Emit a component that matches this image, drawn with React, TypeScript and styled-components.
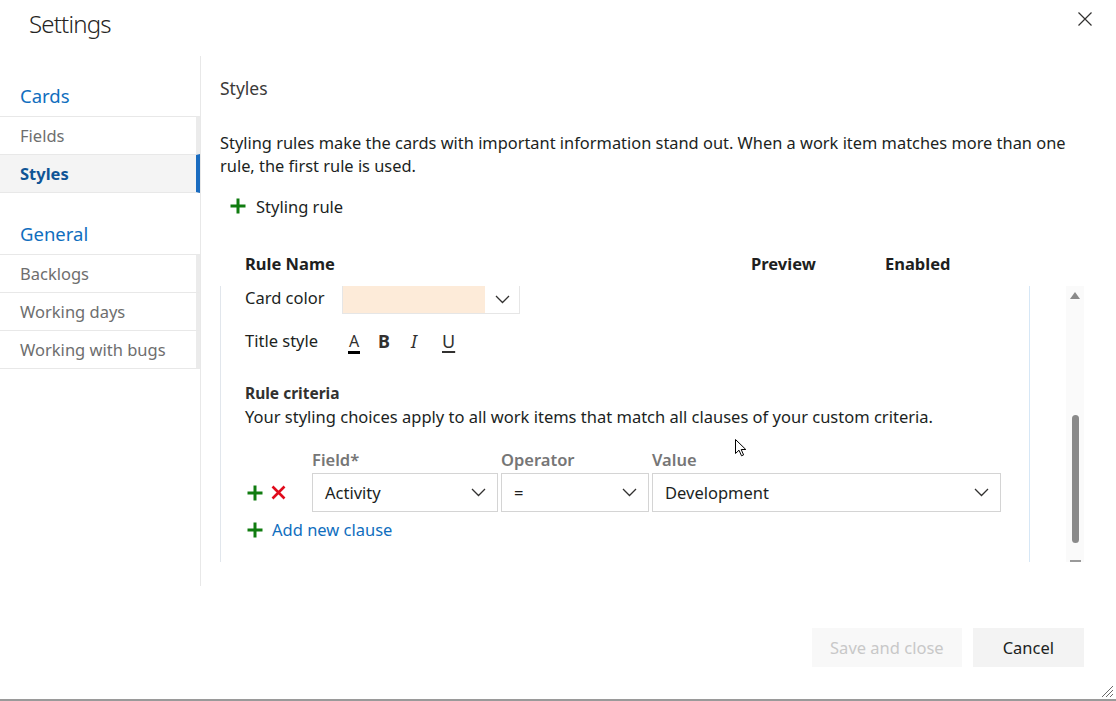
import React from 'react'
import styled, { createGlobalStyle } from 'styled-components'

const GlobalStyle = createGlobalStyle`
  html, body {
    margin: 0;
    padding: 0;
    background: #fff;
  }
  body {
    font-family: "Segoe UI", "Noto Sans", "Open Sans", sans-serif;
    font-size: 16.5px;
    color: #201f1e;
  }
`

const Dialog = styled.div`
  position: relative;
  width: 1116px;
  height: 701px;
  box-sizing: border-box;
  border-bottom: 2px solid #9a9a9a;
  display: flex;
  flex-direction: column;
  background: #fff;
  overflow: hidden;
`

const Header = styled.div`
  height: 56px;
  display: flex;
  justify-content: space-between;
  align-items: flex-start;
  padding: 7px 24px 0 29px;
  box-sizing: border-box;
`

const Title = styled.div`
  font-size: 24px;
  font-weight: 300;
  letter-spacing: -0.8px;
  line-height: 34px;
  color: #252423;
`

const CloseButton = styled.button`
  border: none;
  background: none;
  padding: 0;
  margin-top: 5px;
  width: 14px;
  height: 14px;
  display: flex;
`

const Body = styled.div`
  display: flex;
  height: 530px;
`

const Nav = styled.nav`
  width: 200px;
  border-right: 1px solid #e8e8e8;
  padding-top: 20px;
  box-sizing: content-box;
`

const NavGroup = styled.div`
  & + & {
    margin-top: 21px;
  }
`

const NavHeader = styled.div`
  height: 40px;
  line-height: 40px;
  padding-left: 20px;
  font-size: 18.5px;
  color: #106ebe;
`

const NavItem = styled.div<{ $selected?: boolean }>`
  height: 37px;
  line-height: 37px;
  padding-left: 20px;
  border-top: 1px solid #e8e8e8;
  border-right: 4px solid ${(p) => (p.$selected ? '#1a6cc0' : '#ebebeb')};
  background: ${(p) => (p.$selected ? '#f4f4f4' : '#fff')};
  color: ${(p) => (p.$selected ? '#0f5596' : '#6e6e6e')};
  font-weight: ${(p) => (p.$selected ? 700 : 400)};
  &:last-child {
    border-bottom: 1px solid #e8e8e8;
  }
`

const Main = styled.main`
  flex: 1;
  padding: 20px 32px 0 19px;
  display: flex;
  flex-direction: column;
`

const SectionTitle = styled.div`
  font-size: 17.5px;
  line-height: 24px;
  color: #3b3a39;
`

const Description = styled.p`
  margin: 31px 0 0;
  font-size: 16.4px;
  line-height: 23px;
  color: #201f1e;
`

const AddRuleButton = styled.button`
  margin-top: 13px;
  height: 32px;
  align-self: flex-start;
  display: flex;
  align-items: center;
  gap: 10px;
  padding: 0 0 0 10px;
  border: none;
  background: none;
  font: inherit;
  color: #201f1e;
`

const TableHeader = styled.div`
  margin-top: 30px;
  height: 24px;
  line-height: 24px;
  padding-left: 25px;
  display: grid;
  grid-template-columns: 506px 134px auto;
  font-weight: 700;
  color: #201f1e;
`

const ScrollArea = styled.div`
  margin-top: 10px;
  height: 276px;
  display: flex;
  justify-content: space-between;
`

const ScrollContent = styled.div`
  width: 784px;
  border-left: 1px solid #e1e6ec;
  border-right: 1px solid #d6e7f6;
  padding-left: 24px;
  overflow: hidden;
`

const Scrollbar = styled.div`
  width: 18px;
  background: #fafafa;
  display: flex;
  flex-direction: column;
  align-items: center;
`

const ScrollArrow = styled.div`
  margin-top: 6px;
  width: 0;
  height: 0;
  border-left: 5.5px solid transparent;
  border-right: 5.5px solid transparent;
  border-bottom: 7px solid #8a8a8a;
`

const ScrollThumb = styled.div`
  margin-top: 116px;
  width: 7px;
  height: 128px;
  border-radius: 4px;
  background: #8a8a8a;
`

const ScrollBottom = styled.div`
  margin-top: auto;
  width: 11px;
  height: 2px;
  background: #9a9a9a;
`

const FieldRow = styled.div<{ $height: number; $gap?: number }>`
  height: ${(p) => p.$height}px;
  margin-top: ${(p) => p.$gap ?? 0}px;
  display: flex;
  align-items: center;
`

const RowLabel = styled.div<{ $lift?: number }>`
  width: 97px;
  flex: none;
  padding-bottom: ${(p) => p.$lift ?? 0}px;
`

const ColorPicker = styled.div`
  width: 178px;
  height: 28px;
  box-sizing: border-box;
  border: 1px solid #e6e6e6;
  border-top: none;
  display: flex;
  align-self: flex-start;
`

const ColorSwatch = styled.div`
  width: 142px;
  background: #fdebd9;
`

const ChevronCell = styled.div`
  flex: 1;
  display: flex;
  align-items: center;
  justify-content: center;
`

const StyleButtons = styled.div`
  display: flex;
  align-items: center;
  margin-left: 6px;
`

const StyleButton = styled.span<{ $width: number; $bold?: boolean; $italic?: boolean; $underline?: boolean }>`
  width: ${(p) => p.$width}px;
  font-size: 18px;
  font-weight: ${(p) => (p.$bold ? 700 : 400)};
  font-style: ${(p) => (p.$italic ? 'italic' : 'normal')};
  text-decoration: ${(p) => (p.$underline ? 'underline' : 'none')};
  text-decoration-thickness: 2px;
  text-underline-offset: 3px;
  color: #323130;
`

const FontColorGlyph = styled.span`
  display: inline-block;
  line-height: 18px;
  border-bottom: 3px solid #000;
  padding: 0 1px 1px;
  font-size: 16px;
  color: #323130;
`

const CriteriaTitle = styled.div`
  margin-top: 26px;
  font-size: 15.5px;
  font-weight: 700;
  line-height: 23px;
  color: #323130;
`

const CriteriaText = styled.div`
  line-height: 23px;
`

const ClauseGrid = styled.div<{ $gap?: number }>`
  display: grid;
  grid-template-columns: 62px 186px 148px 349px;
  column-gap: 3px;
  margin-left: 2px;
  margin-top: ${(p) => p.$gap ?? 0}px;
`

const ClauseLabel = styled.div`
  line-height: 23px;
  font-weight: 600;
  color: #767676;
`

const ClauseActions = styled.div`
  display: flex;
  align-items: center;
  gap: 8px;
`

const Dropdown = styled.div`
  height: 39px;
  box-sizing: border-box;
  border: 1px solid #d4d4d4;
  display: flex;
  align-items: center;
  justify-content: space-between;
  padding: 0 11px 0 12px;
  color: #201f1e;
`

const AddClause = styled.div`
  margin: 6px 0 0 2px;
  display: flex;
  align-items: center;
  gap: 9px;
  line-height: 23px;
  color: #106ebe;
`

const Footer = styled.div`
  flex: 1;
  display: flex;
  justify-content: flex-end;
  align-items: flex-start;
  gap: 11px;
  padding: 42px 32px 0 0;
`

const FooterButton = styled.button<{ $disabled?: boolean }>`
  height: 39px;
  padding: 0 ${(p) => (p.$disabled ? 18 : 30)}px;
  border: none;
  font: inherit;
  background: ${(p) => (p.$disabled ? '#f8f8f8' : '#f3f3f3')};
  color: ${(p) => (p.$disabled ? '#c8c8c8' : '#201f1e')};
`

const Cursor = styled.svg`
  position: absolute;
  left: 735px;
  top: 439px;
`

const ResizeGrip = styled.svg`
  position: absolute;
  right: 2px;
  bottom: 1px;
`

const Chevron = () => (
  <svg width="15" height="9" viewBox="0 0 15 9">
    <polyline points="1,1 7.5,7.5 14,1" fill="none" stroke="#323130" strokeWidth="1.3" />
  </svg>
)

const PlusIcon = () => (
  <svg width="16" height="16" viewBox="0 0 16 16">
    <path d="M8 0.5V15.5M0.5 8H15.5" stroke="#107c10" strokeWidth="3" />
  </svg>
)

const RemoveIcon = () => (
  <svg width="15" height="15" viewBox="0 0 15 15">
    <path d="M1.5 1.5L13.5 13.5M13.5 1.5L1.5 13.5" stroke="#e00b1c" strokeWidth="2.6" />
  </svg>
)

const CloseIcon = () => (
  <svg width="14" height="14" viewBox="0 0 14 14">
    <path d="M0.5 0.5L13.5 13.5M13.5 0.5L0.5 13.5" stroke="#323130" strokeWidth="1.2" />
  </svg>
)

const navGroups = [
  { title: 'Cards', items: ['Fields', 'Styles'], selected: 'Styles' },
  { title: 'General', items: ['Backlogs', 'Working days', 'Working with bugs'], selected: '' },
]

const App: React.FC = () => {
  return (
    <Dialog>
      <GlobalStyle />
      <Header>
        <Title>Settings</Title>
        <CloseButton aria-label="Close">
          <CloseIcon />
        </CloseButton>
      </Header>
      <Body>
        <Nav>
          {navGroups.map((group) => (
            <NavGroup key={group.title}>
              <NavHeader>{group.title}</NavHeader>
              <div>
                {group.items.map((item) => (
                  <NavItem key={item} $selected={item === group.selected}>
                    {item}
                  </NavItem>
                ))}
              </div>
            </NavGroup>
          ))}
        </Nav>
        <Main>
          <SectionTitle>Styles</SectionTitle>
          <Description>
            Styling rules make the cards with important information stand out. When a work item matches more than one
            rule, the first rule is used.
          </Description>
          <AddRuleButton>
            <PlusIcon />
            Styling rule
          </AddRuleButton>
          <TableHeader>
            <span>Rule Name</span>
            <span>Preview</span>
            <span>Enabled</span>
          </TableHeader>
          <ScrollArea>
            <ScrollContent>
              <FieldRow $height={28}>
                <RowLabel $lift={5}>Card color</RowLabel>
                <ColorPicker>
                  <ColorSwatch />
                  <ChevronCell>
                    <Chevron />
                  </ChevronCell>
                </ColorPicker>
              </FieldRow>
              <FieldRow $height={30} $gap={12}>
                <RowLabel $lift={1}>Title style</RowLabel>
                <StyleButtons>
                  <StyleButton $width={30}>
                    <FontColorGlyph>A</FontColorGlyph>
                  </StyleButton>
                  <StyleButton $width={33} $bold>B</StyleButton>
                  <StyleButton $width={31} $italic>I</StyleButton>
                  <StyleButton $width={20} $underline>U</StyleButton>
                </StyleButtons>
              </FieldRow>
              <CriteriaTitle>Rule criteria</CriteriaTitle>
              <CriteriaText>Your styling choices apply to all work items that match all clauses of your custom criteria.</CriteriaText>
              <ClauseGrid $gap={20}>
                <span />
                <ClauseLabel>Field*</ClauseLabel>
                <ClauseLabel>Operator</ClauseLabel>
                <ClauseLabel>Value</ClauseLabel>
              </ClauseGrid>
              <ClauseGrid $gap={2}>
                <ClauseActions>
                  <PlusIcon />
                  <RemoveIcon />
                </ClauseActions>
                <Dropdown>
                  Activity
                  <Chevron />
                </Dropdown>
                <Dropdown>
                  =
                  <Chevron />
                </Dropdown>
                <Dropdown>
                  Development
                  <Chevron />
                </Dropdown>
              </ClauseGrid>
              <AddClause>
                <PlusIcon />
                Add new clause
              </AddClause>
            </ScrollContent>
            <Scrollbar>
              <ScrollArrow />
              <ScrollThumb />
              <ScrollBottom />
            </Scrollbar>
          </ScrollArea>
        </Main>
      </Body>
      <Footer>
        <FooterButton $disabled>Save and close</FooterButton>
        <FooterButton>Cancel</FooterButton>
      </Footer>
      <Cursor width="12" height="18" viewBox="0 0 12 18">
        <path d="M0.5 0.5V14.5L4 11.2L6.5 16.8L8.6 15.9L6.2 10.5H10.8Z" fill="#fff" stroke="#000" strokeWidth="1" />
      </Cursor>
      <ResizeGrip width="13" height="13" viewBox="0 0 13 13">
        <path d="M1 12L12 1M5 12L12 5M9 12L12 9" stroke="#6a6a6a" strokeWidth="1" />
      </ResizeGrip>
    </Dialog>
  )
}

export default App
